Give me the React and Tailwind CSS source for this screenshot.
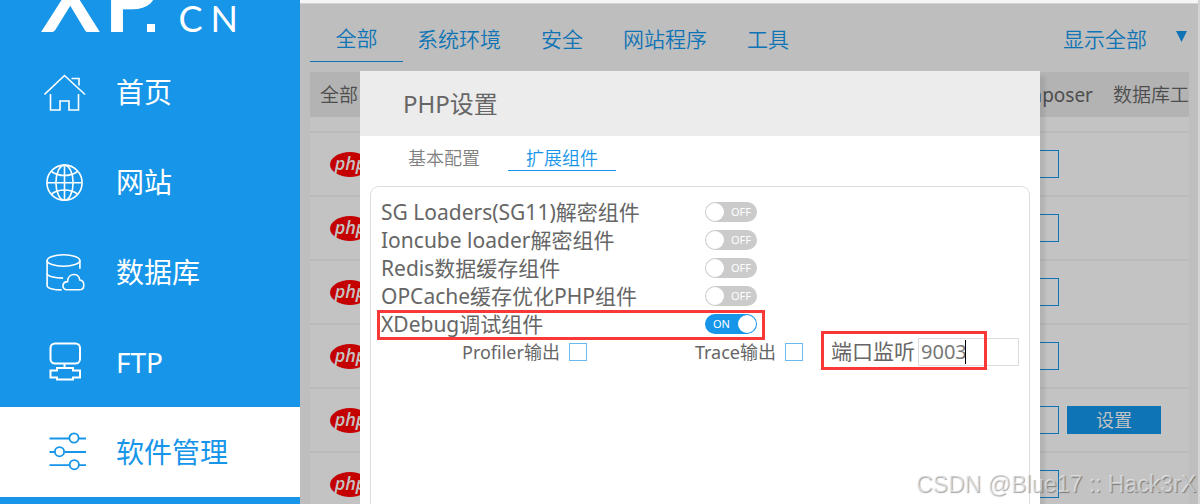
import React, { useState } from 'react';

const HomeIcon = () => (
  <svg viewBox="0 0 42 42" className="w-[42px] h-[42px]" fill="none" stroke="currentColor" strokeWidth="1.6">
    <path d="M0.5 23.5 20.5 4.5 41 23.5" />
    <path d="M27.5 7.5h7.5v7" />
    <path d="M6.5 23v16H16V30h9v9h9.5V23" />
  </svg>
);

const GlobeIcon = () => (
  <svg viewBox="0 0 42 42" className="w-[42px] h-[42px]" fill="none" stroke="currentColor" strokeWidth="1.6">
    <circle cx="20.5" cy="21.7" r="17.6" />
    <ellipse cx="20.5" cy="21.7" rx="8.6" ry="17.6" />
    <path d="M20.5 4v35.3M3 21.7h35" />
    <path d="M7.5 10.5c7 5.3 19 5.3 26 0M7.5 33c7-5.3 19-5.3 26 0" />
  </svg>
);

const DatabaseIcon = () => (
  <svg viewBox="0 0 42 42" className="w-[42px] h-[42px]" fill="none" stroke="currentColor" strokeWidth="1.6">
    <ellipse cx="19.5" cy="9.5" rx="16.4" ry="5.7" />
    <path d="M3.1 9.5v25.2c0 2.3 6 4.2 14.5 4.2M35.9 9.5v8.3" />
    <path d="M3.1 22.5c0 2.6 7 4.6 16 4.6" />
    <path d="M23 38.8c-5.6 0-5.4-8 .6-8.2 0-9 11.4-9.4 12.2-1.6 5.4.6 5.2 9.8 0 9.8z" />
  </svg>
);

const FtpIcon = () => (
  <svg viewBox="0 0 42 42" className="w-[42px] h-[42px]" fill="none" stroke="currentColor" strokeWidth="2">
    <rect x="6.5" y="2.5" width="29.5" height="20" rx="4.5" />
    <path d="M20.5 22.5v4.5" />
    <path d="M13 27h16v2.5h7v7h-7V38.5H13v-2H6.5v-7H13z" />
  </svg>
);

const SlidersIcon = () => (
  <svg viewBox="0 0 42 42" className="w-[42px] h-[42px]" fill="none" stroke="currentColor" strokeWidth="1.8">
    <path d="M5.5 7.5h19.5M35 7.5h7M5.5 21h5M20.5 21H42M5.5 34.2h19.5M35 34.2h7" />
    <circle cx="30" cy="7" r="4.6" />
    <circle cx="15.5" cy="20.7" r="4.6" />
    <circle cx="30.3" cy="33.7" r="4.6" />
  </svg>
);

const menu = [
  { label: '首页', Icon: HomeIcon },
  { label: '网站', Icon: GlobeIcon },
  { label: '数据库', Icon: DatabaseIcon },
  { label: 'FTP', Icon: FtpIcon },
  { label: '软件管理', Icon: SlidersIcon, active: true },
];

const categories = ['全部', '系统环境', '安全', '网站程序', '工具'];

const rows = [
  { id: 1 },
  { id: 2 },
  { id: 3 },
  { id: 4 },
  { id: 5, settings: true },
  { id: 6 },
];

const Sidebar = () => (
  <aside className="w-[300px] shrink-0 bg-[#1695e9] text-white">
    <div className="h-[47px] overflow-hidden flex items-end pb-[11px] pl-[41px] font-['Lato',sans-serif]">
      <div className="flex items-baseline">
        <div className="flex items-baseline font-bold text-[88px] leading-[61px] gap-1">
          <span>X</span>
          <span>P</span>
        </div>
        <span className="w-2 h-2 -ml-3 bg-white" />
        <div className="flex gap-2 text-[36px] leading-none pl-6">
          <span>C</span>
          <span>N</span>
        </div>
      </div>
    </div>
    <nav>
      {menu.map(({ label, Icon, active }) => (
        <a
          key={label}
          href="#"
          className={`flex items-center h-[90px] pl-11 gap-[30px] text-[28px] ${active ? 'bg-white text-[#1695e9]' : 'text-white'}`}
        >
          <Icon />
          <span>{label}</span>
        </a>
      ))}
    </nav>
  </aside>
);

const PhpLogo = () => (
  <span className="flex items-center justify-center w-10 h-[25px] rounded-[50%] bg-[#c40000] text-[#c3c3c3] font-['Open_Sans',sans-serif] italic font-semibold text-[18px] leading-none pb-[2px] pl-px">
    php
  </span>
);

const SoftwareList = () => (
  <div className="pl-[10px] pr-[9px]">
    <div className="flex items-start h-[60px] mt-2 text-[21px] leading-[42px] text-[#0f74b5] font-[350]">
      {categories.map((c, i) => (
        <button key={c} className={i === 0 ? 'h-[50px] pt-[3px] w-[93px] border-b border-[#0f74b5]' : 'h-[50px] pt-[3px] px-5 [&:nth-child(2)]:pl-[14px]'}>
          {c}
        </button>
      ))}
      <button className="h-[50px] pt-[3px] ml-auto pr-[2px] flex items-center gap-[29px]">
        显示全部
        <svg viewBox="0 0 11 11" className="w-[11px] h-[11px] mb-1" fill="currentColor"><path d="M0 0h11L5.5 11z" /></svg>
      </button>
    </div>

    <div className="flex items-center justify-between h-[45px] pl-[10px] pt-[2px] bg-[#b3b3b3] text-[19px] text-[#4d4d4d] overflow-hidden">
      <span className="font-[350]">全部</span>
      <div className="flex gap-5">
        <span>Composer</span>
        <span className="font-[350]">数据库工</span>
      </div>
    </div>

    <div className="bg-[#c3c3c3]">
      <div className="h-[14px]" />
      {rows.map((row) => (
        <div key={row.id} className="flex items-center h-16 pl-5 pr-7 border-t-2 border-[#bababa]">
          <PhpLogo />
          <div className="ml-auto flex gap-2">
            <button aria-label="版本" className="w-[94px] h-7 border border-[#0f74b5]" />
            {row.settings ? (
              <button className="w-[94px] h-7 bg-[#0f74b5] text-[#c3c3c3] text-[18px] leading-7">设置</button>
            ) : (
              <span className="w-[94px]" />
            )}
          </div>
        </div>
      ))}
    </div>
  </div>
);

const Switch = ({ id, checked, onChange }) => (
  <span className={`relative flex items-center w-[52px] h-5 rounded-full text-[11px] text-white ${checked ? 'bg-[#1695e9] pl-2' : 'bg-[#cbcbcb] pl-[26px]'}`}>
    <input id={id} type="checkbox" checked={checked} onChange={onChange} className="absolute inset-0 w-full h-full opacity-0" />
    {checked ? 'ON' : 'OFF'}
    <span className={`absolute top-px w-[18px] h-[18px] rounded-full bg-white ${checked ? 'right-px' : 'left-px'}`} />
  </span>
);

const PhpSettings = () => {
  const [port, setPort] = useState('9003');
  const [extensions, setExtensions] = useState([
    { id: 'sg', label: 'SG Loaders(SG11)解密组件', on: false },
    { id: 'ioncube', label: 'Ioncube loader解密组件', on: false },
    { id: 'redis', label: 'Redis数据缓存组件', on: false },
    { id: 'opcache', label: 'OPCache缓存优化PHP组件', on: false },
    { id: 'xdebug', label: 'XDebug调试组件', on: true, marked: true },
  ]);

  const toggle = (id) => {
    setExtensions(extensions.map(e => (e.id === id ? { ...e, on: !e.on } : e)));
  };

  return (
    <section className="w-full flex flex-col bg-white text-[#666] shadow-[5px_5px_3px_rgba(0,0,0,0.08)]">
      <h2 className="h-[65px] shrink-0 flex items-center pl-[43px] bg-[#ececec] text-[24px]">PHP设置</h2>
      <div className="flex pl-[30px] pt-[9px] text-[18px] leading-[26px] font-[350]">
        <button className="w-[108px] h-[26px] text-[#808080]">基本配置</button>
        <button className="w-[108px] h-[26px] ml-[10px] text-[#1695e9] border-b border-[#1695e9]">扩展组件</button>
      </div>

      <div className="flex-1 mt-[15px] mx-[10px] pt-[11px] px-[10px] border border-b-0 border-[#dcdcdc] rounded-t-[9px]">
        {extensions.map((e) => (
          <div key={e.id} className="relative flex items-center h-7">
            <label htmlFor={e.id} className="w-[324px] text-[21px] leading-[26px]">{e.label}</label>
            <Switch id={e.id} checked={e.on} onChange={() => toggle(e.id)} />
            {e.marked && <span className="absolute -left-1 top-0 w-[388px] h-[30px] border-3 border-[#f93838] pointer-events-none" />}
          </div>
        ))}

        <div className="flex items-center h-7 pl-[81px] text-[18px]">
          <label className="flex items-center gap-[9px]">
            Profiler输出
            <input type="checkbox" className="appearance-none w-[18px] h-[18px] border border-[#6cb9ee]" />
          </label>
          <label className="ml-auto flex items-center gap-[9px]">
            Trace输出
            <input type="checkbox" className="appearance-none w-[18px] h-[18px] border border-[#6cb9ee]" />
          </label>
          <div className="relative ml-7 flex items-center gap-[3px]">
            <label htmlFor="port" className="text-[21px]">端口监听</label>
            <input id="port" value={port} onChange={(e) => setPort(e.target.value)} className="w-[101px] h-7 pl-[2px] text-[20px] text-[#777] border border-[#dcdcdc] outline-none" />
            <span className="absolute left-[134px] top-1 w-px h-6 bg-black" />
            <span className="absolute -left-[10px] -top-[5px] w-[166px] h-[39px] border-3 border-[#f93838] pointer-events-none" />
          </div>
        </div>
      </div>
    </section>
  );
};

export default function App() {
  return (
    <div className="relative flex h-screen overflow-hidden font-['Noto_Sans','Noto_Sans_CJK_SC',sans-serif]">
      <Sidebar />
      <main className="relative flex-1 min-w-0 bg-[#bebebe] border-r-2 border-[#d4d4d4]">
        <div className="h-1 bg-[#f5f5f5] border-b border-[#d4d4d4]" />
        <SoftwareList />
        <div className="absolute inset-0 flex pt-[71px] pl-[60px] pr-[158px]">
          <PhpSettings />
        </div>
      </main>
      <div className="absolute right-1 bottom-1 font-['Liberation_Sans',sans-serif] text-[23px] leading-8 text-white/50 [text-shadow:1px_1px_1px_rgba(0,0,0,0.35)]">
        CSDN @Blue17 :: Hack3rX
      </div>
    </div>
  );
}
